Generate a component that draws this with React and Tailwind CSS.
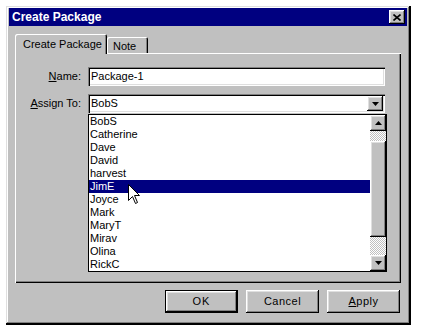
import React from "react";

const raised =
  "shadow-[inset_-1px_-1px_#000000,inset_1px_1px_#ffffff,inset_-2px_-2px_#808080,inset_2px_2px_#dfdfdf]";
const sunken =
  "shadow-[inset_1px_1px_#808080,inset_2px_2px_#000000,inset_-1px_-1px_#ffffff,inset_-2px_-2px_#dfdfdf]";
const checker =
  "bg-[image:repeating-conic-gradient(#c0c0c0_0%_25%,#ffffff_0%_50%)] bg-[size:2px_2px]";

function Tri({ up }) {
  return (
    <svg width="7" height="4" viewBox="0 0 7 4">
      {up ? (
        <path d="M3.5 0 L7 4 L0 4 Z" fill="#000" />
      ) : (
        <path d="M0 0 L7 0 L3.5 4 Z" fill="#000" />
      )}
    </svg>
  );
}

const names = [
  "BobS",
  "Catherine",
  "Dave",
  "David",
  "harvest",
  "JimE",
  "Joyce",
  "Mark",
  "MaryT",
  "Mirav",
  "Olina",
  "RickC",
];

export default function App() {
  return (
    <div className="w-[421px] h-[331px] bg-white pt-[6px] pl-[6px] font-['Liberation_Sans',Arial,sans-serif] text-[11px] leading-[13px] text-black overflow-hidden">
      <div
        className={`w-[405px] h-[319px] bg-[#c0c0c0] pt-[2px] pl-[3px] pr-[4px] flex flex-col shadow-[inset_-2px_-2px_#000000,inset_1px_1px_#dfdfdf,inset_-3px_-3px_#808080,inset_2px_2px_#ffffff]`}
      >
        {/* Title bar */}
        <div className="h-[18px] bg-[#000080] flex items-center justify-between pl-[3px] pr-[2px]">
          <span className="text-white font-bold text-[12px] leading-[14px]">
            Create Package
          </span>
          <div
            className={`w-[16px] h-[14px] bg-[#c0c0c0] ${raised} flex items-center justify-center`}
          >
            <svg width="8" height="7" viewBox="0 0 8 7">
              <path
                d="M0.5 0.5 L7.5 6.5 M7.5 0.5 L0.5 6.5"
                stroke="#000"
                strokeWidth="1.6"
              />
            </svg>
          </div>
        </div>

        {/* Content */}
        <div className="px-[6px] pt-[8px] flex flex-col">
          {/* Tabs */}
          <div className="flex items-end h-[19px]">
            <div className="relative z-10 w-[92px] h-[20px] -mb-[1px] bg-[#c0c0c0] rounded-t-[2px] shadow-[inset_1px_1px_#ffffff,inset_-1px_0_#000000,inset_-2px_0_#808080] flex items-start pt-[4px] pl-[8px]">
              Create Package
            </div>
            <div className="w-[41px] h-[16px] bg-[#c0c0c0] rounded-t-[2px] shadow-[inset_1px_1px_#ffffff,inset_-1px_0_#000000,inset_-2px_0_#808080] pl-[6px] pt-[3px]">
              Note
            </div>
          </div>

          {/* Panel */}
          <div className="h-[230px] shadow-[inset_1px_1px_#ffffff,inset_-1px_-1px_#000000,inset_-2px_-2px_#808080] pt-[14px] flex flex-col">
            {/* Name */}
            <div className="flex items-center h-[19px]">
              <div className="w-[67px] text-right pr-[1px]">
                <span className="underline">N</span>ame:
              </div>
              <div
                className={`ml-[6px] w-[297px] h-[19px] bg-white ${sunken} flex items-center pl-[3px]`}
              >
                Package-1
              </div>
            </div>

            {/* Assign To */}
            <div className="flex items-center h-[19px] mt-[8px]">
              <div className="w-[67px] text-right pr-[1px]">
                <span className="underline">A</span>ssign To:
              </div>
              <div
                className={`ml-[6px] w-[297px] h-[19px] bg-white ${sunken} flex items-center justify-between pl-[3px] pr-[2px]`}
              >
                <span>BobS</span>
                <div
                  className={`w-[16px] h-[15px] bg-[#c0c0c0] ${raised} flex items-center justify-center`}
                >
                  <Tri />
                </div>
              </div>
            </div>

            {/* List */}
            <div className="ml-[73px] mt-[1px] w-[299px] h-[158px] border border-[#000000] bg-white flex relative">
              <div className="flex-1 flex flex-col">
                {names.map((n) => (
                  <div
                    key={n}
                    className={`h-[13px] pl-[1px] ${
                      n === "JimE" ? "bg-[#000080] text-white" : ""
                    }`}
                  >
                    {n}
                  </div>
                ))}
              </div>
              {/* Scrollbar */}
              <div className="w-[16px] flex flex-col bg-[#c0c0c0]">
                <div
                  className={`h-[16px] ${raised} bg-[#c0c0c0] flex items-center justify-center`}
                >
                  <Tri up />
                </div>
                <div className={`h-[10px] ${checker}`} />
                <div className={`h-[96px] ${raised} bg-[#c0c0c0]`} />
                <div className={`flex-1 ${checker}`} />
                <div
                  className={`h-[16px] ${raised} bg-[#c0c0c0] flex items-center justify-center`}
                >
                  <Tri />
                </div>
              </div>
              {/* Cursor */}
              <svg
                className="absolute left-[39px] top-[69px]"
                width="13"
                height="21"
                viewBox="0 0 13 21"
              >
                <path
                  d="M0.5 0.5 L0.5 16.5 L4.5 12.5 L7.5 19.5 L9.5 18.5 L6.5 11.5 L11.5 11.5 Z"
                  fill="#fff"
                  stroke="#000"
                  strokeWidth="1"
                />
              </svg>
            </div>
          </div>

          {/* Buttons */}
          <div className="flex justify-end gap-[8px] mt-[7px] pr-[1px]">
            <div className="w-[73px] h-[23px] border border-black">
              <div
                className={`w-full h-full ${raised} flex items-center justify-center tracking-[1px]`}
              >
                OK
              </div>
            </div>
            <div
              className={`w-[73px] h-[23px] ${raised} flex items-center justify-center tracking-[0.5px]`}
            >
              Cancel
            </div>
            <div
              className={`w-[73px] h-[23px] ${raised} flex items-center justify-center tracking-[0.5px]`}
            >
              <span>
                <span className="underline">A</span>pply
              </span>
            </div>
          </div>
        </div>
      </div>
    </div>
  );
}
